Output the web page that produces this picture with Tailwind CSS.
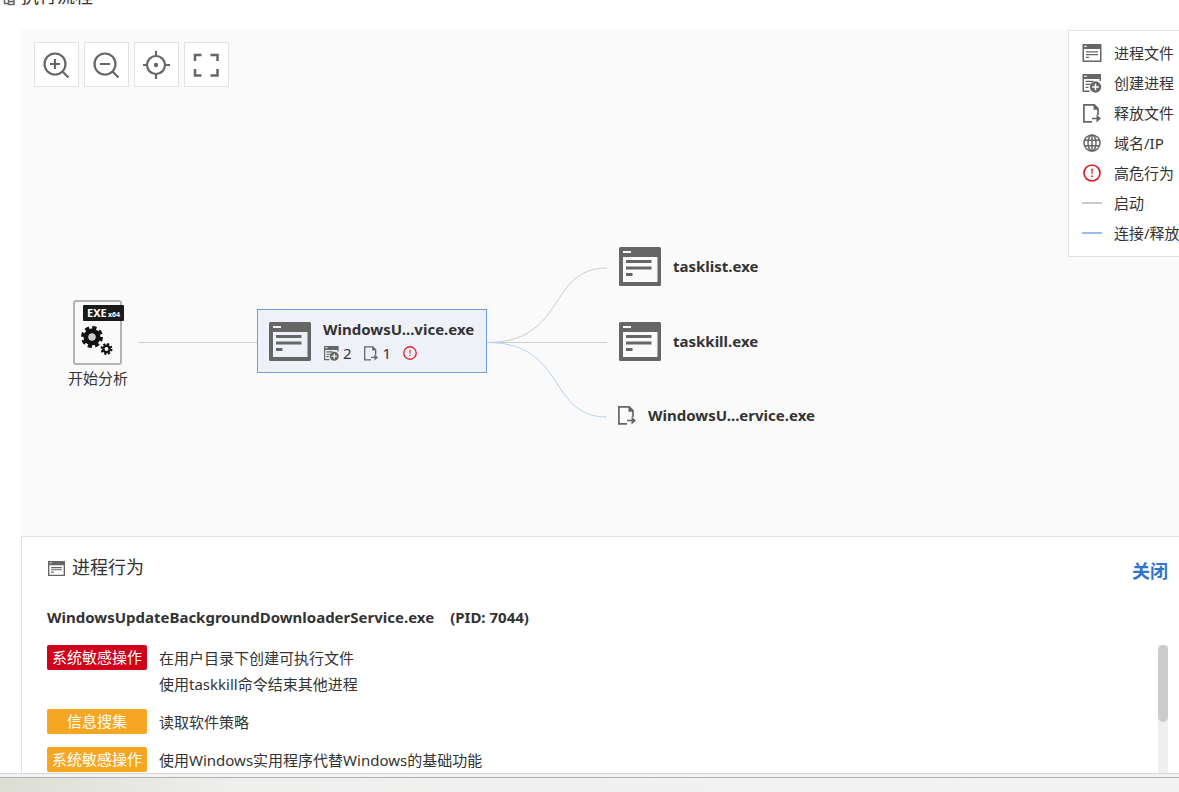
<!DOCTYPE html>
<html lang="zh-CN">
<head>
<meta charset="utf-8">
<meta name="viewport" content="width=device-width, initial-scale=1">
<title>执行流程</title>
<script src="https://cdn.jsdelivr.net/npm/@tailwindcss/browser@4"></script>
</head>
<body class="flex h-screen flex-col overflow-hidden bg-white font-['Noto_Sans','Noto_Sans_CJK_SC',sans-serif] text-[15px] text-[#333]">

<svg class="hidden" aria-hidden="true">
  <symbol id="window-lg" viewBox="0 0 42 39">
    <path fill="#666" fill-rule="evenodd" d="M1.500 0h39a1.500 1.500 0 0 1 1.500 1.500v36a1.500 1.500 0 0 1-1.500 1.500h-39a1.500 1.500 0 0 1-1.500-1.500v-36a1.500 1.500 0 0 1 1.500-1.500zM4 4v2h8V4zM4 10v25h34.500V10z"/>
    <path fill="#666" d="M7 13h25.500v3H7zM7 19.500h25.500v3H7zM7 26h6.500v3H7z"/>
  </symbol>
  <symbol id="window" viewBox="0 0 19 18">
    <path fill="#666" fill-rule="evenodd" d="M0 0h19v18H0zM1.500 1.700v1h3v-1zM1.500 5v11.500h16V5z"/>
    <path fill="#666" d="M3.500 7.300h12v1.300h-12zM3.500 10h12v1.200h-12zM3.500 12.700h3v1.300h-3z"/>
  </symbol>
  <symbol id="create" viewBox="0 0 19 19">
    <path fill="#666" fill-rule="evenodd" d="M0 0h18.500v7h-1.500V5H1.500v11.500H7V18H0zM1.500 1.700v1h3v-1z"/>
    <path fill="#666" d="M3 6.800h8v1.300H3zM3 9.800h5v1.300H3zM3 12.800h3v1.300H3z"/>
    <circle cx="13" cy="13" r="5.700" fill="#666"/>
    <path stroke="#fff" stroke-width="1.500" d="M13 9.700v6.600M9.700 13h6.600"/>
  </symbol>
  <symbol id="drop" viewBox="0 0 18 19">
    <path fill="none" stroke="#666" stroke-width="1.700" d="M9 17.800H.9V.9h10.400L15 4.600V11"/>
    <path fill="#666" d="M10.500.5l5.200 5.200h-5.200zM13.500 10.500l4.500 4-4.500 4v-3.200H9v-1.600h4.500z"/>
  </symbol>
  <symbol id="globe" viewBox="0 0 18 18">
    <g fill="none" stroke="#666" stroke-width="1.500"><circle cx="9" cy="9" r="8"/><ellipse cx="9" cy="9" rx="4" ry="8"/><path d="M9 1v16M1.500 6.300h15M1.500 11.700h15"/></g>
  </symbol>
  <symbol id="danger" viewBox="0 0 18 18">
    <circle cx="9" cy="9" r="8" fill="none" stroke="#dc1f26" stroke-width="1.700"/>
    <path fill="#dc1f26" d="M8.200 4.800h1.600l-.3 5.400h-1zM8.200 11.500h1.600V13H8.200z"/>
  </symbol>
</svg>

<header class="h-[29px] shrink-0">
  <h1 class="-mt-4 flex h-6 items-center gap-1.5 pl-[3px] text-[18px] leading-6">
    <svg class="h-3 w-3 translate-y-1" viewBox="0 0 12 12" fill="none" stroke="#666" stroke-width="1.500" aria-hidden="true"><path d="M1.500 1v8.500H5M5.500 4.500h5.500v6H5.500zM5.500 7.500H11"/></svg>
    执行流程
  </h1>
</header>

<main class="relative ml-5 h-[507px] shrink-0 overflow-hidden bg-[#fafafa]">
  <div class="absolute left-3.5 top-[13px] flex gap-[5px]">
    <button type="button" aria-label="放大" class="flex h-[45px] w-[45px] items-center justify-center border border-[#e2e2e2] bg-white">
      <svg class="h-7 w-7" viewBox="1 0 28 28" fill="none" stroke="#666" stroke-width="2.200"><circle cx="13" cy="13" r="10.500"/><path d="M20.500 20.500l6 6M8 13h10M13 8v10"/></svg>
    </button>
    <button type="button" aria-label="缩小" class="flex h-[45px] w-[45px] items-center justify-center border border-[#e2e2e2] bg-white">
      <svg class="h-7 w-7" viewBox="1 0 28 28" fill="none" stroke="#666" stroke-width="2.200"><circle cx="13" cy="13" r="10.500"/><path d="M20.500 20.500l6 6M8 13h10"/></svg>
    </button>
    <button type="button" aria-label="定位" class="flex h-[45px] w-[45px] items-center justify-center border border-[#e2e2e2] bg-white">
      <svg class="h-7 w-7" viewBox="1 0 28 28" fill="none" stroke="#666" stroke-width="2.200"><circle cx="14" cy="14" r="9"/><circle cx="14" cy="14" r="2.200" fill="#666" stroke="none"/><path d="M14 0v5M14 23v5M1 14h4M23 14h5"/></svg>
    </button>
    <button type="button" aria-label="全屏" class="flex h-[45px] w-[45px] items-center justify-center border border-[#e2e2e2] bg-white">
      <svg class="h-7 w-7" viewBox="1 0 28 28" fill="none" stroke="#666" stroke-width="2.500"><path d="M3 10V4H9.500M18.500 4H25.500v6M3 18v6.500h6.500M18.500 24.500h7V18"/></svg>
    </button>
  </div>

  <svg class="absolute left-0 top-0 h-[507px] w-[700px]" viewBox="0 0 700 507" fill="none" aria-hidden="true">
    <path stroke="#ccc" d="M118 313.500H237M467 313.500H587M467 313.500C547 313.500 527 239 587 239"/>
    <path stroke="#b9d2f0" d="M467 313.500C547 313.500 527 388 587 388"/>
  </svg>

  <div class="absolute left-12 top-[271px] flex flex-col items-center">
    <svg class="h-[66px] w-[56px]" viewBox="0 0 56 66" aria-hidden="true">
      <rect x="4" y="1" width="47" height="63" rx="2" fill="#fafafa" stroke="#b3b3b3" stroke-width="2"/>
      <rect x="13" y="5" width="41" height="16" rx="1" fill="#1a1a1a"/>
      <text x="17" y="17" fill="#fff" font-size="11" font-weight="700" font-family="Noto Sans">EXE</text>
      <text x="38" y="17" fill="#fff" font-size="7" font-weight="700" font-family="Noto Sans">x64</text>
      <g fill="none" stroke="#111">
        <circle cx="22" cy="37" r="6" stroke-width="5"/><circle cx="22" cy="37" r="9" stroke-width="4" stroke-dasharray="4 3.068"/>
        <circle cx="36.500" cy="49" r="3.200" stroke-width="2.400"/><circle cx="36.500" cy="49" r="4.900" stroke-width="2.200" stroke-dasharray="2.100 1.748"/>
      </g>
      <circle cx="22" cy="37" r="3.500" fill="#ccc"/>
    </svg>
    <span class="leading-6">开始分析</span>
  </div>

  <div class="absolute left-[237px] top-[280px] flex h-16 w-[230px] items-center gap-3 border border-[#6f9fd8] bg-[#eef2f8] pl-[11px]">
    <svg class="h-[39px] w-[42px] shrink-0" aria-hidden="true"><use href="#window-lg"/></svg>
    <div>
      <div class="whitespace-nowrap font-bold leading-6">WindowsU...vice.exe</div>
      <div class="flex items-center leading-6">
        <svg class="ml-px mr-1 h-[15px] w-[15px]" aria-hidden="true"><use href="#create"/></svg>2
        <svg class="ml-3 mr-[5px] h-[15px] w-[14px]" aria-hidden="true"><use href="#drop"/></svg>1
        <svg class="ml-3 h-[14px] w-[14px]" aria-hidden="true"><use href="#danger"/></svg>
      </div>
    </div>
  </div>

  <div class="absolute left-[599px] top-[218px] flex items-center gap-3">
    <svg class="h-[39px] w-[42px]" aria-hidden="true"><use href="#window-lg"/></svg>
    <span class="font-bold">tasklist.exe</span>
  </div>
  <div class="absolute left-[599px] top-[293px] flex items-center gap-3">
    <svg class="h-[39px] w-[42px]" aria-hidden="true"><use href="#window-lg"/></svg>
    <span class="font-bold">taskkill.exe</span>
  </div>
  <div class="absolute left-[598px] top-[375px] flex items-center gap-3">
    <svg class="h-[19px] w-[18px]" aria-hidden="true"><use href="#drop"/></svg>
    <span class="font-bold">WindowsU...ervice.exe</span>
  </div>

  <ul class="absolute -right-1 top-px w-[115px] border border-[#e2e2e2] bg-white pb-2 pt-[7px] pl-[13px] leading-[30px] [&>li]:flex [&>li]:items-center [&>li]:gap-3 [&>li]:whitespace-nowrap [&_svg]:shrink-0">
    <li><svg class="h-[18px] w-5" aria-hidden="true"><use href="#window"/></svg>进程文件</li>
    <li><svg class="h-[19px] w-5" aria-hidden="true"><use href="#create"/></svg>创建进程</li>
    <li><svg class="h-[19px] w-5" aria-hidden="true"><use href="#drop"/></svg>释放文件</li>
    <li><svg class="h-[18px] w-5" aria-hidden="true"><use href="#globe"/></svg>域名/IP</li>
    <li><svg class="h-[18px] w-5" aria-hidden="true"><use href="#danger"/></svg>高危行为</li>
    <li><svg class="h-0.5 w-5 bg-[#ccc]" aria-hidden="true"></svg>启动</li>
    <li><svg class="h-0.5 w-5 bg-[#9abbe6]" aria-hidden="true"></svg>连接/释放</li>
  </ul>
</main>

<section class="ml-[21px] flex min-h-0 flex-1 flex-col border-l border-t border-[#e2e2e2] pl-[25px] pr-[11px]">
  <div class="flex items-center justify-between pt-3">
    <h2 class="flex items-center gap-[7px] pl-px text-[18px] leading-7"><svg class="h-[15px] w-[17px] translate-y-px" viewBox="0 0 19 18" preserveAspectRatio="none" aria-hidden="true"><use href="#window"/></svg>进程行为</h2>
    <a href="#" class="mt-2 text-[18px] font-bold leading-7 text-[#2e75cc]">关闭</a>
  </div>
  <h3 class="mt-5 flex gap-4 font-bold leading-6"><span>WindowsUpdateBackgroundDownloaderService.exe</span><span>(PID: 7044)</span></h3>
  <div class="mt-4 flex min-h-0 flex-1 overflow-hidden">
    <dl class="grid flex-1 grid-cols-[100px_1fr] content-start gap-x-3 gap-y-3 leading-[26px]">
      <dt class="h-[25px] rounded-xs bg-[#d0021b] text-center leading-[25px] text-white">系统敏感操作</dt>
      <dd>在用户目录下创建可执行文件<br>使用taskkill命令结束其他进程</dd>
      <dt class="h-[25px] rounded-xs bg-[#f5a623] text-center leading-[25px] text-white">信息搜集</dt>
      <dd>读取软件策略</dd>
      <dt class="h-[25px] rounded-xs bg-[#f5a623] text-center leading-[25px] text-white">系统敏感操作</dt>
      <dd>使用Windows实用程序代替Windows的基础功能</dd>
    </dl>
    <div class="w-2.5 bg-[#efefef]"><div class="h-[77px] rounded-full bg-[#ccc]"></div></div>
  </div>
</section>

<footer class="shrink-0 border-t border-[#d8d8d8] bg-[#f3f3f3] pt-[3px]">
  <div class="h-[15px] border-t border-[#b0b0b0] bg-linear-to-r from-[#dcddd3] via-[#eff0ee] via-20% to-[#f2f2f2]"></div>
</footer>
</body>
</html>
